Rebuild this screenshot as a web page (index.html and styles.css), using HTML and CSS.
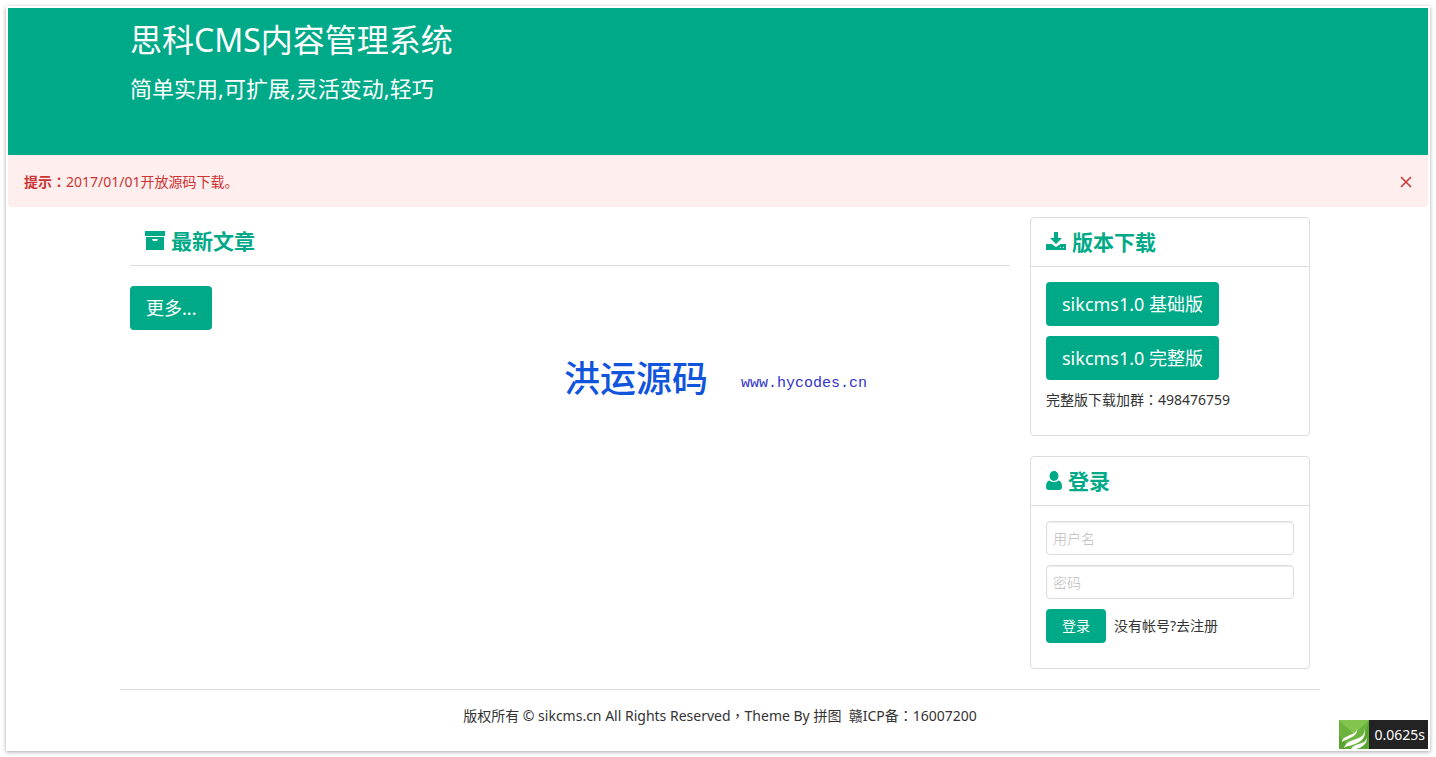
FILE: index.html
```html
<!DOCTYPE html>
<html lang="zh-CN">
<head>
<meta charset="utf-8">
<title>思科CMS内容管理系统</title>
<link rel="stylesheet" href="styles.css">
</head>
<body>
<div class="page">
  <header class="header">
    <div class="container">
      <h1 class="site-title">思科CMS内容管理系统</h1>
      <p class="site-slogan">简单实用,可扩展,灵活变动,轻巧</p>
    </div>
  </header>
  <div class="alert" role="alert">
    <p class="alert-text"><strong>提示<span class="punct" lang="zh-TW">：</span></strong>2017/01/01开放源码下载。</p>
    <button class="alert-close" type="button" aria-label="关闭">
      <svg width="12" height="12" viewBox="0 0 12 12"><path d="M1 1l10 10M11 1L1 11" fill="none" stroke="currentColor" stroke-width="1.5"/></svg>
    </button>
  </div>
  <main class="main">
    <div class="container columns">
      <section class="articles">
        <h2 class="heading">
          <svg width="20" height="20" viewBox="0 0 20 20" fill="currentColor"><path d="M0 0h20v5H0z"/><path fill-rule="evenodd" d="M1 6h18v13H1zM7 8l1 2h4l1-2z"/></svg>
          最新文章
        </h2>
        <a class="button button-big" href="#">更多...</a>
      </section>
      <aside class="side">
        <section class="card">
          <h2 class="heading">
            <svg width="20" height="20" viewBox="0 0 20 20" fill="currentColor"><path d="M8 0h4v6h4l-6 6-6-6h4z"/><path fill-rule="evenodd" d="M0 12h5.500l4.500 3 4.500-3H20v6H0zM14 15v1h1v-1zM17 15v1h1v-1z"/></svg>
            版本下载
          </h2>
          <div class="card-body downloads">
            <a class="button button-big" href="#">sikcms1.0 基础版</a>
            <a class="button button-big" href="#">sikcms1.0 完整版</a>
            <p class="note">完整版下载加群<span class="punct" lang="zh-TW">：</span>498476759</p>
          </div>
        </section>
        <section class="card">
          <h2 class="heading">
            <svg width="16" height="20" viewBox="0 0 16 20" fill="currentColor"><ellipse cx="8" cy="5" rx="4.500" ry="5"/><path d="M3.500 9.500Q8 12.500 12.500 9.500 16 10 16 16q0 3-3 3H3Q0 19 0 16q0-6 3.500-6.500z"/></svg>
            登录
          </h2>
          <form class="card-body">
            <input class="field" type="text" placeholder="用户名" aria-label="用户名">
            <input class="field" type="password" placeholder="密码" aria-label="密码">
            <div class="login-row">
              <button class="button" type="button">登录</button>
              <a class="register" href="#">没有帐号?去注册</a>
            </div>
          </form>
        </section>
      </aside>
    </div>
  </main>
  <footer class="footer">
    <p class="copyright">版权所有 © sikcms.cn All Rights Reserved<span class="punct" lang="zh-TW">，</span>Theme By 拼图&nbsp; 赣ICP备<span class="punct" lang="zh-TW">：</span>16007200</p>
  </footer>
  <div class="watermark"><span class="mark-name">洪运源码</span><span class="mark-url">www.hycodes.cn</span></div>
  <div class="trace">
    <svg width="30" height="29" viewBox="0 0 30 29"><path fill="#6cb33e" d="M0 0h30v29H0z"/><path fill="#83c44f" d="M0 0h30L15 14z"/><path fill="#5aa432" d="M0 29V16l12 13zM30 0v29h-8z"/><g fill="#fff"><path d="M17 5c3 6-1 8-6 10-4 2-8 3-8 7 2-2 5-2 8-4 6-2 9-7 6-13z"/><path d="M25 8c2 6-2 9-8 11-6 2-10 3-12 9 2-2 6-2 11-4 8-3 12-9 9-16z"/><path d="M27 17c1 4-3 6-7 7-4 1-6 2-8 5h5c3-1 6-2 8-4 3-3 3-5 2-8z"/></g></svg>
    <span class="trace-time">0.0625s</span>
  </div>
</div>
</body>
</html>
```
FILE: styles.css
```css
* { box-sizing: border-box; }
body {
  margin: 0;
  padding: 6px;
  background: #fff;
  color: #333;
  font: 14px/20px "Noto Sans", "Noto Sans CJK SC", sans-serif;
}
h1, h2, p { margin: 0; }
a { color: inherit; text-decoration: none; }
.punct { font-family: "Noto Sans CJK TC", sans-serif; line-height: 1; }
.page {
  position: relative;
  min-height: calc(100vh - 12px);
  padding: 2px;
  box-shadow: 0 1px 4px rgba(0, 0, 0, .35);
}
.container { max-width: 1200px; margin: 0 auto; padding: 0 10px; }
.header, .main, .footer { padding-left: 4px; }
.header { padding-top: 8px; padding-bottom: 50px; background: #0a8; color: #fff; }
.site-title { font-size: 32px; line-height: 48px; font-weight: 400; }
.site-slogan { padding-top: 8px; font-size: 22px; line-height: 33px; }
.alert {
  display: flex;
  justify-content: space-between;
  align-items: center;
  padding: 17px 16px 15px;
  border-radius: 0 0 4px 4px;
  background: #fee;
  color: #c33;
}
.alert-close { display: flex; padding: 0; border: 0; background: none; color: inherit; }
.main { padding-top: 10px; }
.columns { display: grid; grid-template-columns: minmax(0, 1fr) 280px; gap: 20px; }
.side { display: grid; gap: 20px; align-content: start; }
.heading {
  display: flex;
  align-items: center;
  gap: 6px;
  padding: 8px 15px;
  border-bottom: 1px solid #ddd;
  color: #0a8;
  font-size: 21px;
  line-height: 32px;
}
.articles .heading { margin-bottom: 20px; }
.card { border: 1px solid #ddd; border-radius: 4px; }
.card-body { display: flex; flex-direction: column; gap: 10px; padding: 15px 15px 25px; }
.downloads { align-items: flex-start; }
.button {
  display: inline-block;
  padding: 6px 16px;
  border: 0;
  border-radius: 4px;
  background: #0a8;
  color: #fff;
  font: inherit;
  line-height: 22px;
}
.button-big { padding: 10px 16px; font-size: 18px; line-height: 24px; }
.field {
  width: 100%;
  height: 34px;
  padding: 6px;
  border: 1px solid #ddd;
  border-radius: 4px;
  box-shadow: inset 0 1px 1px rgba(0, 0, 0, .08);
  font: inherit;
}
.field::placeholder { color: #bbb; font-weight: 300; }
.login-row { display: flex; align-items: center; gap: 8px; }
.footer { padding-top: 20px; padding-bottom: 22px; }
.copyright {
  max-width: 1200px;
  margin: 0 auto;
  padding-top: 16px;
  border-top: 1px solid #ddd;
  text-align: center;
}
.watermark {
  position: absolute;
  top: 348px;
  left: 558px;
  display: flex;
  align-items: center;
  gap: 33px;
  line-height: 40px;
}
.mark-name { color: #15d; font-size: 36px; font-weight: 500; }
.mark-url { padding-top: 10px; color: #33c; font-family: "Liberation Mono", monospace; font-size: 15px; }
.trace {
  position: absolute;
  right: 2px;
  bottom: 2px;
  display: flex;
  background: #232323;
  color: #fff;
}
.trace-time { padding: 0 3px 0 6px; line-height: 30px; height: 29px; }
```
